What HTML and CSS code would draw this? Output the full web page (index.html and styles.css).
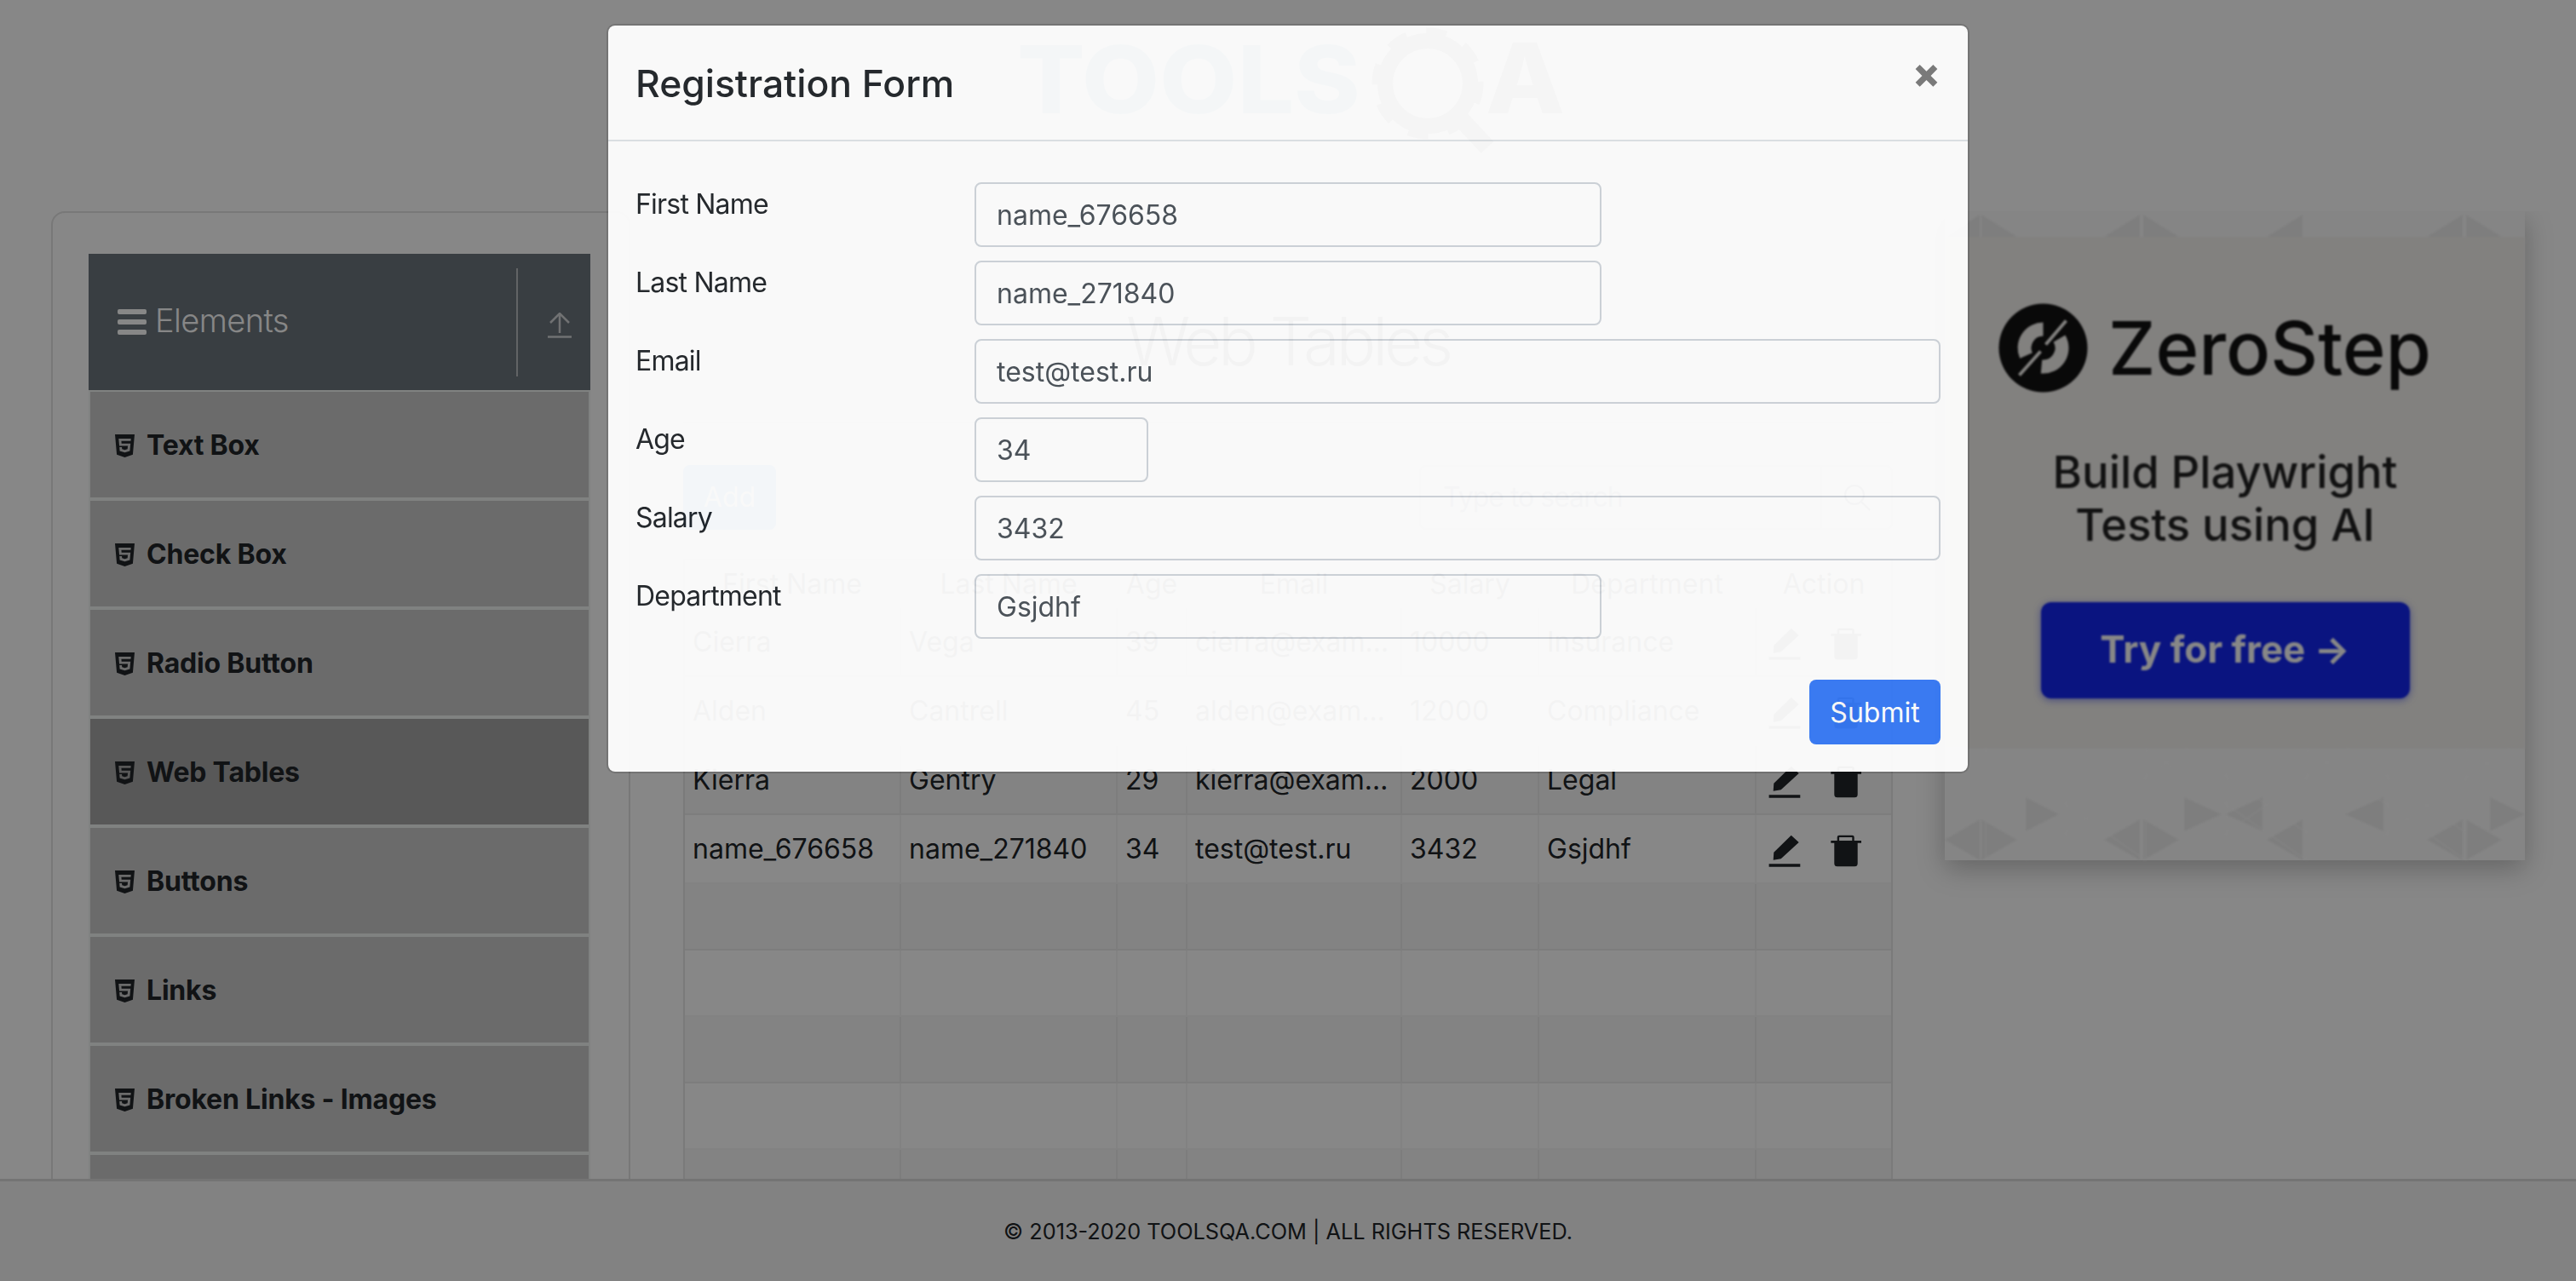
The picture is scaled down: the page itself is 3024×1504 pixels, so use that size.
FILE: index.html
```html
<!DOCTYPE html>
<html lang="en">
    <head>
        <title>Web Tables</title>
        <meta charset="utf-8" />
        <link rel="stylesheet" href="styles.css">
    </head>
    <body>
        <header class="top">
            <svg class="logo" width="660" height="150" viewBox="0 0 660 150">
                <text class="logo-word" x="0" y="100" textLength="403" lengthAdjust="spacingAndGlyphs">TOOLS</text>
                <circle class="gear-ring" cx="482" cy="65" r="50"></circle>
                <circle class="gear-teeth" cx="482" cy="65" r="59"></circle>
                <line class="gear-handle" x1="512" y1="97" x2="552" y2="140"></line>
                <text class="logo-a" x="550" y="100" textLength="93" lengthAdjust="spacingAndGlyphs">A</text>
            </svg>
        </header>

        <main class="main">
            <aside class="side-card">
                <div class="group-head">
                    <svg class="bars" width="34" height="30" viewBox="0 0 34 30">
                        <rect width="34" height="6" rx="2"></rect>
                        <rect y="12" width="34" height="6" rx="2"></rect>
                        <rect y="24" width="34" height="6" rx="2"></rect>
                    </svg>
                    <span class="group-title">Elements</span>
                    <span class="group-line"></span>
                    <svg class="upload" width="28" height="30" viewBox="0 0 28 30">
                        <path d="M14 24V2M3 12L14 1l11 11M0 28.5h28"></path>
                    </svg>
                </div>
                <ul class="menu">
                    <li class="menu-item"><svg class="shield" viewBox="0 32 384 448"><path d="M0 32l34.9 395.8L191.5 480l157.6-52.2L384 32H0zm308.2 127.9H124.4l4.1 49.4h175.6l-13.6 148.4-97.9 27v.3h-1.1l-98.7-27.3-6-75.8h47.7L138 320l53.5 14.5 53.7-14.5 6-62.2H84.3L71.5 112.2h241.1l-4.4 47.7z"></path></svg>Text Box</li>
                    <li class="menu-item"><svg class="shield" viewBox="0 32 384 448"><path d="M0 32l34.9 395.8L191.5 480l157.6-52.2L384 32H0zm308.2 127.9H124.4l4.1 49.4h175.6l-13.6 148.4-97.9 27v.3h-1.1l-98.7-27.3-6-75.8h47.7L138 320l53.5 14.5 53.7-14.5 6-62.2H84.3L71.5 112.2h241.1l-4.4 47.7z"></path></svg>Check Box</li>
                    <li class="menu-item"><svg class="shield" viewBox="0 32 384 448"><path d="M0 32l34.9 395.8L191.5 480l157.6-52.2L384 32H0zm308.2 127.9H124.4l4.1 49.4h175.6l-13.6 148.4-97.9 27v.3h-1.1l-98.7-27.3-6-75.8h47.7L138 320l53.5 14.5 53.7-14.5 6-62.2H84.3L71.5 112.2h241.1l-4.4 47.7z"></path></svg>Radio Button</li>
                    <li class="menu-item active"><svg class="shield" viewBox="0 32 384 448"><path d="M0 32l34.9 395.8L191.5 480l157.6-52.2L384 32H0zm308.2 127.9H124.4l4.1 49.4h175.6l-13.6 148.4-97.9 27v.3h-1.1l-98.7-27.3-6-75.8h47.7L138 320l53.5 14.5 53.7-14.5 6-62.2H84.3L71.5 112.2h241.1l-4.4 47.7z"></path></svg>Web Tables</li>
                    <li class="menu-item"><svg class="shield" viewBox="0 32 384 448"><path d="M0 32l34.9 395.8L191.5 480l157.6-52.2L384 32H0zm308.2 127.9H124.4l4.1 49.4h175.6l-13.6 148.4-97.9 27v.3h-1.1l-98.7-27.3-6-75.8h47.7L138 320l53.5 14.5 53.7-14.5 6-62.2H84.3L71.5 112.2h241.1l-4.4 47.7z"></path></svg>Buttons</li>
                    <li class="menu-item"><svg class="shield" viewBox="0 32 384 448"><path d="M0 32l34.9 395.8L191.5 480l157.6-52.2L384 32H0zm308.2 127.9H124.4l4.1 49.4h175.6l-13.6 148.4-97.9 27v.3h-1.1l-98.7-27.3-6-75.8h47.7L138 320l53.5 14.5 53.7-14.5 6-62.2H84.3L71.5 112.2h241.1l-4.4 47.7z"></path></svg>Links</li>
                    <li class="menu-item"><svg class="shield" viewBox="0 32 384 448"><path d="M0 32l34.9 395.8L191.5 480l157.6-52.2L384 32H0zm308.2 127.9H124.4l4.1 49.4h175.6l-13.6 148.4-97.9 27v.3h-1.1l-98.7-27.3-6-75.8h47.7L138 320l53.5 14.5 53.7-14.5 6-62.2H84.3L71.5 112.2h241.1l-4.4 47.7z"></path></svg>Broken Links - Images</li>
                    <li class="menu-item"></li>
                </ul>
            </aside>

            <section class="content">
                <h1 class="page-title">Web Tables</h1>
                <div class="tables-wrap">
                    <div class="controls">
                        <button class="add-btn" type="button">Add</button>
                        <div class="search">
                            <span class="search-text">Type to search</span>
                            <span class="search-icon">
                                <svg width="32" height="32" viewBox="0 0 32 32"><circle cx="13" cy="13" r="11"></circle><path d="M21 21l10 10"></path></svg>
                            </span>
                        </div>
                    </div>
                    <table class="grid">
                        <colgroup>
                            <col class="c-first"><col class="c-name"><col class="c-age"><col class="c-email"><col class="c-sal"><col class="c-dep"><col class="c-act">
                        </colgroup>
                        <thead>
                            <tr><th>First Name</th><th>Last Name</th><th>Age</th><th>Email</th><th>Salary</th><th>Department</th><th>Action</th></tr>
                        </thead>
                        <tbody>
                            <tr class="data"><td>Cierra</td><td>Vega</td><td>39</td><td>cierra@example.com</td><td>10000</td><td>Insurance</td>
                                <td><div class="actions">
                                    <svg class="edit" width="38" height="38" viewBox="0 0 38 38"><path d="M5.7 29.7L6.3 20.7 26.7.7 35.7 9 14.7 28.3zM.6 34.3h36.7v3.4H.6z"></path></svg>
                                    <svg class="trash" width="36" height="38" viewBox="0 0 36 38"><path d="M4.3 9.7h27.4v24q0 3.600-3.600 3.600H7.900q-3.600 0-3.600-3.600zM.3 7h35.700v2.700H.3zM7.700 7V3q0-2.300 2.300-2.300h15.400q2.300 0 2.300 2.300v4h-2.400V3H10.100v4z"></path></svg>
                                </div></td></tr>
                            <tr class="data"><td>Alden</td><td>Cantrell</td><td>45</td><td>alden@example.com</td><td>12000</td><td>Compliance</td>
                                <td><div class="actions">
                                    <svg class="edit" width="38" height="38" viewBox="0 0 38 38"><path d="M5.7 29.7L6.3 20.7 26.7.7 35.7 9 14.7 28.3zM.6 34.3h36.7v3.4H.6z"></path></svg>
                                    <svg class="trash" width="36" height="38" viewBox="0 0 36 38"><path d="M4.3 9.7h27.4v24q0 3.600-3.600 3.600H7.900q-3.600 0-3.600-3.600zM.3 7h35.700v2.700H.3zM7.700 7V3q0-2.300 2.300-2.300h15.400q2.300 0 2.300 2.300v4h-2.400V3H10.100v4z"></path></svg>
                                </div></td></tr>
                            <tr class="data"><td>Kierra</td><td>Gentry</td><td>29</td><td>kierra@example.com</td><td>2000</td><td>Legal</td>
                                <td><div class="actions">
                                    <svg class="edit" width="38" height="38" viewBox="0 0 38 38"><path d="M5.7 29.7L6.3 20.7 26.7.7 35.7 9 14.7 28.3zM.6 34.3h36.7v3.4H.6z"></path></svg>
                                    <svg class="trash" width="36" height="38" viewBox="0 0 36 38"><path d="M4.3 9.7h27.4v24q0 3.600-3.600 3.600H7.900q-3.600 0-3.600-3.600zM.3 7h35.700v2.700H.3zM7.700 7V3q0-2.300 2.300-2.300h15.400q2.300 0 2.300 2.300v4h-2.400V3H10.100v4z"></path></svg>
                                </div></td></tr>
                            <tr class="data"><td>name_676658</td><td>name_271840</td><td>34</td><td>test@test.ru</td><td>3432</td><td>Gsjdhf</td>
                                <td><div class="actions">
                                    <svg class="edit" width="38" height="38" viewBox="0 0 38 38"><path d="M5.7 29.7L6.3 20.7 26.7.7 35.7 9 14.7 28.3zM.6 34.3h36.7v3.4H.6z"></path></svg>
                                    <svg class="trash" width="36" height="38" viewBox="0 0 36 38"><path d="M4.3 9.7h27.4v24q0 3.600-3.600 3.600H7.900q-3.600 0-3.600-3.600zM.3 7h35.700v2.700H.3zM7.700 7V3q0-2.300 2.300-2.300h15.400q2.300 0 2.300 2.300v4h-2.400V3H10.100v4z"></path></svg>
                                </div></td></tr>
                            <tr class="empty"><td></td><td></td><td></td><td></td><td></td><td></td><td></td></tr>
                            <tr class="empty"><td></td><td></td><td></td><td></td><td></td><td></td><td></td></tr>
                            <tr class="empty"><td></td><td></td><td></td><td></td><td></td><td></td><td></td></tr>
                            <tr class="empty"><td></td><td></td><td></td><td></td><td></td><td></td><td></td></tr>
                            <tr class="empty"><td></td><td></td><td></td><td></td><td></td><td></td><td></td></tr>
                        </tbody>
                    </table>
                </div>
            </section>

            <aside class="ad">
                <svg class="ad-pattern" width="681" height="762" viewBox="0 0 681 762">
                    <rect class="ad-mid" y="30" width="681" height="601"></rect>
                    <g class="ad-dark">
                        <path d="M0 738L41 714V762zM43 714L85 738 43 762zM187 738L229 714V762zM233 714L275 738 233 762zM378 738L420 714V762zM566 738L608 714V762zM612 714L654 738 612 762z"></path>
                        <path d="M281 688L325 708 281 728zM329 708L373 688V728zM95 688L134 708 95 728zM470 708L515 688V728zM640 688L681 708 640 728z"></path>
                        <path d="M187 30L229 4V30zM233 4L275 30H233zM378 30L420 4V30zM566 30L608 4V30zM612 4L654 30H612zM0 30L41 4V30zM43 4L85 30H43z"></path>
                    </g>
                    <g class="ad-lines">
                        <path d="M0 660L48 631 236 762M95 762L284 631 425 730M236 631L425 762M284 762L473 631 612 730M425 631L612 762M473 762L662 631 681 645M612 631L681 680M48 631V762M143 631V762M236 631V762M331 631V762M425 631V762M520 631V762M612 631V762"></path>
                    </g>
                </svg>
                <div class="ad-inner">
                    <div class="ad-brand">
                        <svg class="ad-mark" width="107" height="107" viewBox="-53.500 -53.500 107 107">
                            <circle class="mark-disc" r="52"></circle>
                            <path class="mark-arc" d="M0-22A22 22 0 0 0-20 9M19-11A22 22 0 0 1-2 22"></path>
                            <path class="mark-bar" d="M-28 32L-3 4M3-4L27-32"></path>
                        </svg>
                        <span class="ad-name">ZeroStep</span>
                    </div>
                    <p class="ad-text">Build Playwright<br>Tests using AI</p>
                    <div class="ad-cta">Try for free →</div>
                </div>
            </aside>
        </main>

        <footer class="foot">© 2013-2020 TOOLSQA.COM | ALL RIGHTS RESERVED.</footer>

        <div class="backdrop"></div>

        <div class="modal-wrap">
            <div class="modal">
                <div class="modal-head">
                    <div class="modal-title">Registration Form</div>
                    <span class="close">×</span>
                </div>
                <form class="modal-body">
                    <div class="row"><label class="row-label">First Name</label><input class="field w-mid" value="name_676658"></div>
                    <div class="row"><label class="row-label">Last Name</label><input class="field w-mid" value="name_271840"></div>
                    <div class="row"><label class="row-label">Email</label><input class="field w-full" value="test@test.ru"></div>
                    <div class="row"><label class="row-label">Age</label><input class="field w-small" value="34"></div>
                    <div class="row"><label class="row-label">Salary</label><input class="field w-full" value="3432"></div>
                    <div class="row"><label class="row-label">Department</label><input class="field w-mid" value="Gsjdhf"></div>
                    <div class="submit-row"><button class="submit" type="button">Submit</button></div>
                </form>
            </div>
        </div>
    </body>
</html>
```

FILE: styles.css
```css
* { box-sizing: border-box; }

html, body { height: 100%; }

body {
    margin: 0;
    height: 1504px;
    overflow: hidden;
    display: flex;
    flex-direction: column;
    background-color: #fff;
    color: #212529;
    font-family: Inter, "Liberation Sans", sans-serif;
    font-size: 32px;
    line-height: 48px;
}

/* logo row */
.top {
    flex: none;
    height: 248px;
    padding: 33px 0 0 1194px;
}
.logo { display: block; overflow: visible; }
.logo-word { font-family: Inter, sans-serif; font-size: 110px; font-weight: 800; fill: #3f9fc4; }
.logo-a { font-family: Inter, sans-serif; font-size: 114px; font-weight: 800; fill: #555; }
.gear-ring { fill: none; stroke: #555; stroke-width: 18px; }
.gear-teeth { fill: none; stroke: #555; stroke-width: 13px; stroke-dasharray: 23 23; }
.gear-handle { stroke: #555; stroke-width: 20px; }

.main {
    flex: 1;
    min-height: 0;
    display: flex;
    padding-left: 60px;
    overflow: hidden;
}

/* left menu */
.side-card {
    flex: none;
    width: 680px;
    height: 1300px;
    padding: 48px 45px 0 42px;
    border: 2px solid #e2e2e2;
    border-radius: 16px;
}
.group-head {
    height: 160px;
    display: flex;
    align-items: center;
    padding: 0 22px 0 34px;
    background-color: #6c757d;
    color: #fff;
}
.bars { fill: #fff; margin-right: 10px; }
.group-title { font-size: 38px; font-weight: 300; letter-spacing: -.6px; padding-bottom: 5px; }
.group-line {
    width: 2px;
    height: 127px;
    margin: 0 35px 0 auto;
    background-color: #b9bdc0;
}
.upload { fill: none; stroke: #d4d6d8; stroke-width: 2.5px; margin-top: 8px; }

.menu {
    list-style: none;
    margin: 0;
    padding: 0 2px;
    background-color: #f1f5f3;
}
.menu-item {
    display: flex;
    align-items: center;
    height: 124px;
    padding: 2px 0 0 29px;
    margin-bottom: 4px;
    background-color: #cacaca;
    font-weight: 700;
    letter-spacing: -.2px;
    position: relative;
    top: 2px;
}
.menu-item.active { background-color: #a6a6a6; }
.shield { flex: none; width: 23px; height: 27px; margin-right: 14px; fill: #212529; }

/* middle column */
.content {
    flex: none;
    width: 1543px;
    padding: 0 61px 0 62px;
}
.page-title {
    margin: 105px 0 0;
    font-size: 78px;
    line-height: 96px;
    font-weight: 300;
    letter-spacing: -4.300px;
    text-align: center;
}
.tables-wrap {
    margin-top: 46px;
    padding-top: 49px;
    border-top: 2px solid #ececec;
}
.controls {
    display: flex;
    justify-content: space-between;
    height: 76px;
    margin-bottom: 34px;
}
.add-btn {
    width: 109px;
    border: 0;
    border-radius: 8px;
    background-color: #007bff;
    color: #fff;
    font: inherit;
}
.search {
    width: 556px;
    display: flex;
    border: 2px solid #ced4da;
    border-radius: 8px;
}
.search-text { flex: 1; align-self: center; padding-left: 26px; color: #6c757d; letter-spacing: -1px; }
.search-icon {
    width: 83px;
    display: flex;
    align-items: center;
    justify-content: center;
    border-left: 2px solid #ced4da;
}
.search-icon svg { fill: none; stroke: #495057; stroke-width: 2px; }

.grid {
    width: 1420px;
    table-layout: fixed;
    border-collapse: separate;
    border-spacing: 0;
    border: 2px solid #e6e6e6;
    border-bottom: 0;
}
.c-first { width: 254px; }
.c-name { width: 254px; }
.c-age { width: 82px; }
.c-email { width: 252px; }
.c-sal { width: 161px; }
.c-dep { width: 255px; }
.c-act { width: 158px; }
.grid th {
    height: 56px;
    padding: 0 9px;
    font-weight: 400;
    border-right: 2px solid rgba(0, 0, 0, .04);
}
.grid td {
    padding: 0 4px 0 9px;
    white-space: nowrap;
    overflow: hidden;
    text-overflow: ellipsis;
    border-right: 2px solid rgba(0, 0, 0, .04);
    border-bottom: 2px solid rgba(0, 0, 0, .04);
}
.grid th:last-child, .grid td:last-child { border-right: 0; }
.data td { height: 81px; }
.empty td { height: 78px; }
.grid tbody tr:nth-child(odd) { background-color: #f7f7f7; }
.grid tbody tr:nth-child(even) { background-color: #fff; }
.actions { display: flex; align-items: center; gap: 35px; padding-left: 5px; margin-top: 4px; }
.edit, .trash { flex: none; fill: #212529; }

/* advert on the right */
.ad {
    flex: none;
    width: 681px;
    height: 762px;
    position: relative;
    background-color: #fcfcfc;
    box-shadow: 0 10px 30px rgba(0, 0, 0, .25);
}
.ad-pattern { position: absolute; top: 0; left: 0; filter: blur(1px); }
.ad-mid { fill: #f5f3f0; }
.ad-dark { fill: #eeeeee; }
.ad-lines path { fill: none; stroke: #fff; stroke-width: 2px; opacity: .4; }
.ad-inner {
    position: relative;
    display: flex;
    flex-direction: column;
    align-items: center;
    padding: 107px 23px 0 0;
    filter: blur(.8px);
}
.ad-brand { display: flex; align-items: center; gap: 23px; margin-right: 25px; }
.mark-disc { fill: #111; }
.mark-arc { fill: none; stroke: #f5f3f0; stroke-width: 16px; }
.mark-bar { fill: none; stroke: #f5f3f0; stroke-width: 4px; }
.ad-name { font-size: 86.500px; line-height: 107px; font-weight: 500; color: #111; }
.ad-text {
    margin: 61px 0 60px;
    font-size: 52.500px;
    line-height: 62px;
    font-weight: 500;
    text-align: center;
    color: #222;
}
.ad-cta {
    width: 433px;
    height: 113px;
    display: flex;
    align-items: center;
    justify-content: center;
    padding-bottom: 3px;
    border-radius: 12px;
    background-color: #1326f1;
    color: #fff;
    font-size: 44px;
    font-weight: 700;
    box-shadow: 0 2px 8px rgba(20, 37, 240, .5);
}

.foot {
    flex: none;
    height: 120px;
    display: flex;
    align-items: center;
    justify-content: center;
    background-color: #f5f5f5;
    border-top: 3px solid #dcdcdc;
    font-size: 25.300px;
}

/* modal on top of everything */
.backdrop {
    position: fixed;
    top: 0;
    left: 0;
    right: 0;
    bottom: 0;
    background-color: rgba(0, 0, 0, .47);
}
.modal-wrap {
    position: fixed;
    top: 0;
    left: 0;
    right: 0;
    display: flex;
    justify-content: center;
    padding-top: 28px;
}
.modal {
    width: 1600px;
    height: 880px;
    background-color: #fefefe;
    border: 2px solid rgba(0, 0, 0, .15);
    border-radius: 10px;
    background-clip: padding-box;
    opacity: .96;
}
.modal-head {
    height: 136px;
    display: flex;
    justify-content: space-between;
    padding: 32px;
    border-bottom: 2px solid #dee2e6;
}
.modal-title { font-size: 44.400px; line-height: 72px; font-weight: 500; }
.close { font-size: 48px; line-height: 48px; font-weight: 800; color: #7a7a7a; }
.modal-body { display: flex; flex-direction: column; gap: 16px; padding: 48px 32px 0; }
.row { display: flex; align-items: flex-start; height: 76px; }
.row-label { flex: none; width: 398px; padding-top: 2px; letter-spacing: -.8px; }
.field {
    height: 76px;
    padding: 1px 24px 0;
    border: 2px solid #ced4da;
    border-radius: 8px;
    background-color: #fefefe;
    color: #495057;
    font: inherit;
}
.w-mid { width: 736px; }
.w-full { width: 1134px; }
.w-small { width: 204px; }
.submit-row { display: flex; justify-content: flex-end; margin-top: 32px; }
.submit {
    width: 154px;
    height: 76px;
    padding-top: 2px;
    border: 0;
    border-radius: 8px;
    background-color: #377af6;
    color: #fff;
    font: inherit;
}
```
